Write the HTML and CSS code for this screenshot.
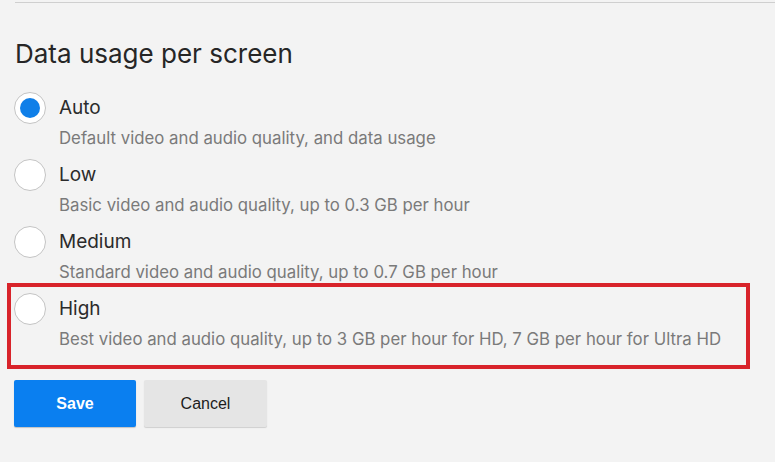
FILE: index.html
```html
<!DOCTYPE html>
<html>
<head>
<meta charset="utf-8">
<link rel="stylesheet" href="styles.css">
</head>
<body>
<div class="page">
  <div class="rule"></div>
  <h1 class="title">Data usage per screen</h1>
  <div class="options">
    <div class="option">
      <span class="radio checked"></span>
      <div class="texts">
        <div class="label">Auto</div>
        <div class="desc">Default video and audio quality, and data usage</div>
      </div>
    </div>
    <div class="option">
      <span class="radio"></span>
      <div class="texts">
        <div class="label">Low</div>
        <div class="desc">Basic video and audio quality, up to 0.3 GB per hour</div>
      </div>
    </div>
    <div class="option">
      <span class="radio"></span>
      <div class="texts">
        <div class="label">Medium</div>
        <div class="desc">Standard video and audio quality, up to 0.7 GB per hour</div>
      </div>
    </div>
    <div class="option highlighted">
      <span class="radio"></span>
      <div class="texts">
        <div class="label">High</div>
        <div class="desc">Best video and audio quality, up to 3 GB per hour for HD, 7 GB per hour for Ultra HD</div>
      </div>
      <span class="annotation"></span>
    </div>
  </div>
  <div class="actions">
    <button class="btn btn-save">Save</button>
    <button class="btn btn-cancel">Cancel</button>
  </div>
</div>
</body>
</html>
```
FILE: styles.css
```css
html, body {
  margin: 0;
  padding: 0;
  background: #f3f3f3;
}
body {
  font-family: Inter, "Noto Sans", sans-serif;
  color: #222;
  width: 775px;
  height: 462px;
  overflow: hidden;
}
.page {
  padding-left: 14px;
}
.rule {
  margin-top: 2px;
  margin-left: 1px;
  height: 1px;
  background: #cfcfcf;
}
.title {
  margin: 35px 0 0 1px;
  font-size: 26px;
  font-weight: 400;
  line-height: 32px;
  color: #262626;
  letter-spacing: 0;
}
.options {
  margin-top: 22px;
  display: flex;
  flex-direction: column;
}
.option {
  position: relative;
  display: flex;
  align-items: flex-start;
  height: 67px;
}
.radio {
  box-sizing: border-box;
  width: 32px;
  height: 32px;
  border-radius: 50%;
  background: #fff;
  border: 1px solid #c4c4c4;
  display: flex;
  align-items: center;
  justify-content: center;
  flex: none;
}
.radio.checked::after {
  content: "";
  width: 20px;
  height: 20px;
  border-radius: 50%;
  background: #0f7fe8;
}
.texts {
  margin-left: 13px;
}
.label {
  font-size: 19px;
  line-height: 32px;
  color: #2b2b2b;
}
.desc {
  font-size: 16.8px;
  line-height: 22px;
  margin-top: 3px;
  color: #7a7a7a;
}
.annotation {
  position: absolute;
  left: -7px;
  top: -10px;
  width: 743px;
  height: 86px;
  box-sizing: border-box;
  border: 4px solid #d8232a;
  pointer-events: none;
}
.actions {
  margin-top: 20px;
  display: flex;
  gap: 8px;
}
.btn {
  width: 122px;
  height: 47px;
  border: none;
  border-radius: 2px;
  font-family: "Liberation Sans", Arial, sans-serif;
  font-size: 16px;
  cursor: pointer;
}
.btn-save {
  background: #0a7ff0;
  color: #fff;
  font-weight: 700;
  box-shadow: 0 1px 1px rgba(0,0,0,0.2);
}
.btn-cancel {
  width: 123px;
  background: #e5e5e5;
  color: #1c1c1c;
  box-shadow: 0 1px 1px rgba(0,0,0,0.15);
}
```
